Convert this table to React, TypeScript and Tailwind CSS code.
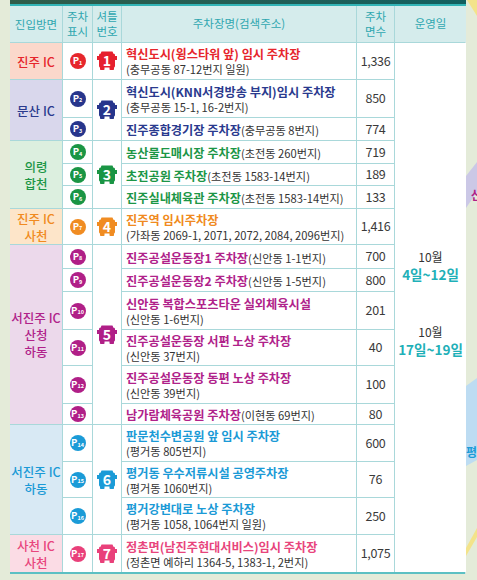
import React from 'react';

type Row = { p: number; title: string; addr: string; inline?: boolean; count: string };

type Group = {
  label: string[];
  bus: number;
  span: string;
  cellBg: string;
  labelText: string;
  titleText: string;
  pillBg: string;
  fill: string;
  rows: Row[];
};

// 진입방면 groups line up one-to-one with the shuttle numbers
const groups: Group[] = [
  {
    label: ['진주 IC'],
    bus: 1,
    span: 'row-span-1',
    cellBg: 'bg-[#fbd8cb]',
    labelText: 'text-[#e6262c]',
    titleText: 'text-[#e6262c]',
    pillBg: 'bg-[#e6262c]',
    fill: '#e6202e',
    rows: [{ p: 1, title: '혁신도시(윙스타워 앞) 임시 주차장', addr: '(충무공동 87-12번지 일원)', count: '1,336' }],
  },
  {
    label: ['문산 IC'],
    bus: 2,
    span: 'row-span-2',
    cellBg: 'bg-[#d9d7ec]',
    labelText: 'text-[#2a3a8e]',
    titleText: 'text-[#2a3a8e]',
    pillBg: 'bg-[#27358c]',
    fill: '#27358c',
    rows: [
      { p: 2, title: '혁신도시(KNN서경방송 부지)임시 주차장', addr: '(충무공동 15-1, 16-2번지)', count: '850' },
      { p: 3, title: '진주종합경기장 주차장', addr: '(충무공동 8번지)', inline: true, count: '774' },
    ],
  },
  {
    label: ['의령', '합천'],
    bus: 3,
    span: 'row-span-3',
    cellBg: 'bg-[#dcefdf]',
    labelText: 'text-[#1c9646]',
    titleText: 'text-[#1c9646]',
    pillBg: 'bg-[#1a9544]',
    fill: '#1a9544',
    rows: [
      { p: 4, title: '농산물도매시장 주차장', addr: '(초전동 260번지)', inline: true, count: '719' },
      { p: 5, title: '초전공원 주차장', addr: '(초전동 1583-14번지)', inline: true, count: '189' },
      { p: 6, title: '진주실내체육관 주차장', addr: '(초전동 1583-14번지)', inline: true, count: '133' },
    ],
  },
  {
    label: ['진주 IC', '사천'],
    bus: 4,
    span: 'row-span-1',
    cellBg: 'bg-[#fde5c9]',
    labelText: 'text-[#f08a20]',
    titleText: 'text-[#f08a20]',
    pillBg: 'bg-[#f08c22]',
    fill: '#f08c22',
    rows: [{ p: 7, title: '진주역 임시주차장', addr: '(가좌동 2069-1, 2071, 2072, 2084, 2096번지)', count: '1,416' }],
  },
  {
    label: ['서진주 IC', '산청', '하동'],
    bus: 5,
    span: 'row-span-6',
    cellBg: 'bg-[#ecd9eb]',
    labelText: 'text-[#b0228a]',
    titleText: 'text-[#b0228a]',
    pillBg: 'bg-[#b01f87]',
    fill: '#b01f87',
    rows: [
      { p: 8, title: '진주공설운동장1 주차장', addr: '(신안동 1-1번지)', inline: true, count: '700' },
      { p: 9, title: '진주공설운동장2 주차장', addr: '(신안동 1-5번지)', inline: true, count: '800' },
      { p: 10, title: '신안동 복합스포츠타운 실외체육시설', addr: '(신안동 1-6번지)', count: '201' },
      { p: 11, title: '진주공설운동장 서편 노상 주차장', addr: '(신안동 37번지)', count: '40' },
      { p: 12, title: '진주공설운동장 동편 노상 주차장', addr: '(신안동 39번지)', count: '100' },
      { p: 13, title: '남가람체육공원 주차장', addr: '(이현동 69번지)', inline: true, count: '80' },
    ],
  },
  {
    label: ['서진주 IC', '하동'],
    bus: 6,
    span: 'row-span-3',
    cellBg: 'bg-[#d8e9f4]',
    labelText: 'text-[#1b9ad6]',
    titleText: 'text-[#1b9ad6]',
    pillBg: 'bg-[#1b9bd7]',
    fill: '#1b9bd7',
    rows: [
      { p: 14, title: '판문천수변공원 앞 임시 주차장', addr: '(평거동 805번지)', count: '600' },
      { p: 15, title: '평거동 우수저류시설 공영주차장', addr: '(평거동 1060번지)', count: '76' },
      { p: 16, title: '평거강변대로 노상 주차장', addr: '(평거동 1058, 1064번지 일원)', count: '250' },
    ],
  },
  {
    label: ['사천 IC', '사천'],
    bus: 7,
    span: 'row-span-1',
    cellBg: 'bg-[#fbdce5]',
    labelText: 'text-[#e8457c]',
    titleText: 'text-[#e8457c]',
    pillBg: 'bg-[#e9407a]',
    fill: '#e9407a',
    rows: [{ p: 17, title: '정촌면(남진주현대서비스)임시 주차장', addr: '(정촌면 예하리 1364-5, 1383-1, 2번지)', count: '1,075' }],
  },
];

function ParkingPill({ n, bg }: { n: number; bg: string }) {
  return (
    <span className={`flex h-4 w-4 items-center justify-center rounded-full ${bg}`}>
      <span className="text-[9.5px] font-bold leading-none text-white">P</span>
      <span className="mt-[5px] text-[5.5px] font-bold leading-none text-white">{n}</span>
    </span>
  );
}

// Little bus-front shape holding the shuttle number
function BusBadge({ n, fill }: { n: number; fill: string }) {
  return (
    <svg width="20" height="20" viewBox="0 0 20 20">
      <rect x="4" y="0.5" width="12" height="4" rx="1" fill={fill} />
      <rect x="2" y="2.5" width="16" height="14" rx="1.5" fill={fill} />
      <rect x="0" y="5" width="2.5" height="4" fill={fill} />
      <rect x="17.5" y="5" width="2.5" height="4" fill={fill} />
      <rect x="3" y="15" width="4.5" height="4" rx="0.8" fill={fill} />
      <rect x="12.5" y="15" width="4.5" height="4" rx="0.8" fill={fill} />
      <text x="10" y="15" textAnchor="middle" fontSize="14" fontWeight="700" fill="#fff" fontFamily="Noto Sans CJK KR, sans-serif">
        {n}
      </text>
    </svg>
  );
}

function MapEdge() {
  return (
    <svg width="11" height="580" viewBox="0 0 11 580" className="block">
      <rect width="11" height="580" fill="#e4ebd9" />
      <polygon points="1,0 11,0 11,16" fill="#f3e38a" />
      <polygon points="0,176 11,162 11,192 0,208" fill="#cbc8e6" />
      <text x="5" y="200" fontSize="12" fontWeight="700" fill="#b01f87" fontFamily="Noto Sans CJK KR, sans-serif">산</text>
      <polygon points="0,386 11,378 11,460 0,466" fill="#bddcf2" />
      <text x="0" y="457" fontSize="12" fontWeight="700" fill="#1b9bd7" fontFamily="Noto Sans CJK KR, sans-serif">평</text>
      <polygon points="0,548 11,528 11,537 0,556" fill="#f3e38a" />
    </svg>
  );
}

export default function App() {
  return (
    <div className="flex h-[580px] w-[477px] overflow-hidden bg-[#e4ebd9] pl-[10px] font-['Noto_Sans_CJK_KR',sans-serif]">
      <div className="flex w-[456px] flex-col">
        {/* dark title band + teal rule */}
        <div className="h-[4px] bg-gradient-to-r from-[#2f5c49] to-[#115f5f]" />
        <div className="h-[2px] bg-[#32b4b6]" />

        <div className="grid grid-cols-[52px_29px_28px_234px_37px_71px] grid-rows-[36px_36px_37px_22px_22px_21px_22px_35px_23px_22px_37px_35px_37px_20px_36px_35px_36px_37px] gap-px border-r border-[#cfe4e2] bg-[#a9d8da]">
          {/* Header */}
          <div className="col-start-1 flex items-center justify-center bg-[#d5ecec] text-[11.5px] leading-[14px] text-[#2fa7b0]">진입방면</div>
          <div className="col-start-2 flex flex-col items-center justify-center bg-[#d5ecec] text-[11.5px] leading-[15px] text-[#2fa7b0]">
            <span>주차</span>
            <span>표시</span>
          </div>
          <div className="col-start-3 flex flex-col items-center justify-center bg-[#d5ecec] text-[11.5px] leading-[15px] text-[#2fa7b0]">
            <span>셔틀</span>
            <span>번호</span>
          </div>
          <div className="col-start-4 flex items-center justify-center bg-[#d5ecec] text-[11.5px] text-[#2fa7b0]">주차장명(검색주소)</div>
          <div className="col-start-5 flex flex-col items-center justify-center bg-[#d5ecec] text-[11.5px] leading-[15px] text-[#2fa7b0]">
            <span>주차</span>
            <span>면수</span>
          </div>
          <div className="col-start-6 flex items-center justify-center bg-[#d5ecec] text-[11.5px] text-[#2fa7b0]">운영일</div>

          {groups.map((g, gi) =>
            g.rows.map((r, ri) => (
              <React.Fragment key={r.p}>
                {ri === 0 && (
                  <div className={`col-start-1 ${g.span} ${g.cellBg} ${g.labelText} flex flex-col items-center justify-center text-[12.5px] font-medium leading-[17px]`}>
                    {g.label.map((l) => (
                      <span key={l}>{l}</span>
                    ))}
                  </div>
                )}
                <div className="col-start-2 flex items-center justify-center bg-white">
                  <ParkingPill n={r.p} bg={g.pillBg} />
                </div>
                {ri === 0 && (
                  <div className={`col-start-3 ${g.span} flex items-center justify-center bg-white`}>
                    <BusBadge n={g.bus} fill={g.fill} />
                  </div>
                )}
                <div className="col-start-4 flex flex-col justify-center overflow-hidden whitespace-nowrap bg-white pl-[4px]">
                  {r.inline ? (
                    <div className="leading-[16px]">
                      <span className={`text-[12.2px] font-bold ${g.titleText}`}>{r.title}</span>
                      <span className="text-[11.2px] text-[#333]">{r.addr}</span>
                    </div>
                  ) : (
                    <>
                      <span className={`text-[12.2px] font-bold leading-[16px] ${g.titleText}`}>{r.title}</span>
                      <span className="text-[11.2px] leading-[14px] text-[#333]">{r.addr}</span>
                    </>
                  )}
                </div>
                <div className="col-start-5 flex items-center justify-center bg-white text-[12.5px] tracking-[-0.3px] text-[#3a3a3a]">{r.count}</div>
                {gi === 0 && ri === 0 && (
                  <div className="col-start-6 row-span-17 flex flex-col items-center justify-center gap-[41px] bg-white pb-[8px]">
                    <div className="flex flex-col items-center">
                      <span className="text-[12px] leading-[16px] text-[#333]">10월</span>
                      <span className="text-[13.5px] font-bold leading-[18px] text-[#1fb0b8]">4일~12일</span>
                    </div>
                    <div className="flex flex-col items-center">
                      <span className="text-[12px] leading-[16px] text-[#333]">10월</span>
                      <span className="text-[13.5px] font-bold leading-[18px] text-[#1fb0b8]">17일~19일</span>
                    </div>
                  </div>
                )}
              </React.Fragment>
            ))
          )}
        </div>
        <div className="h-[2px] border-r border-[#cfe4e2] bg-[#5cc0c3]" />
      </div>
      <MapEdge />
    </div>
  );
}
